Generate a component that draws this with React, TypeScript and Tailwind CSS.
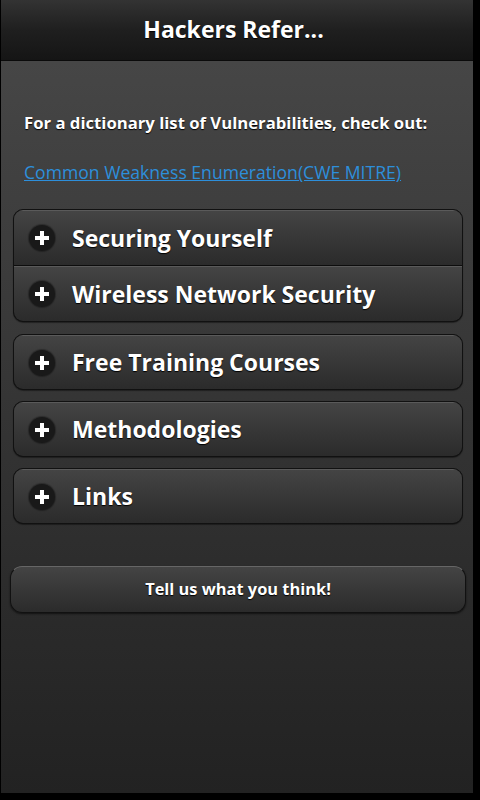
import React from "react";

const font = { fontFamily: '"Open Sans", "Noto Sans", "DejaVu Sans", sans-serif' };

function Plus() {
  return (
    <div className="w-[26px] h-[26px] rounded-full bg-[#191919] flex items-center justify-center shrink-0 shadow-[0_0_1px_1px_rgba(0,0,0,0.3)]">
      <svg width="16" height="16" viewBox="0 0 16 16">
        <rect x="6" y="1" width="4" height="14" fill="#fff" />
        <rect x="1" y="6" width="14" height="4" fill="#fff" />
      </svg>
    </div>
  );
}

function Row({ title, tall }: { title: string; tall?: boolean }) {
  return (
    <div
      className={`${tall ? "h-[55px]" : "h-[54px]"} flex items-center pl-[15px] bg-gradient-to-b from-[#444444] to-[#2b2b2b] border-t border-[#5a5a5a]`}
    >
      <Plus />
      <span className="ml-[17px] text-[23px] font-bold text-white [text-shadow:0_1px_1px_#000]">{title}</span>
    </div>
  );
}

function Group({ titles }: { titles: string[] }) {
  const tall = titles.length > 1;
  return (
    <div
      className={`mx-[12px] w-[450px] rounded-[10px] border border-[#111] overflow-hidden flex flex-col gap-px bg-[#0d0d0d] shadow-[0_1px_1px_rgba(0,0,0,0.4)] ${
        tall ? "mb-[1px]" : ""
      }`}
    >
      {titles.map((t) => (
        <Row key={t} title={t} tall={tall} />
      ))}
    </div>
  );
}

export default function App() {
  return (
    <div className="w-[480px] h-[800px] bg-black flex" style={font}>
      <div className="w-[472px] h-[793px] ml-px flex flex-col">
        <div className="h-[61px] shrink-0 bg-gradient-to-b from-[#333333] via-[#1f1f1f] to-[#151515] border-b border-[#0a0a0a] flex items-center justify-center pr-[7px]">
          <span className="text-[23px] font-bold text-white -mt-[2px] [text-shadow:0_1px_1px_#000]">Hackers Refer...</span>
        </div>
        <div className="flex-1 bg-gradient-to-b from-[#464646] to-[#222222] flex flex-col">
          <p className="mt-[50px] ml-[23px] text-[16.7px] leading-[24px] font-bold text-white [text-shadow:0_1px_1px_#000]">
            For a dictionary list of Vulnerabilities, check out:
          </p>
          <a className="mt-[25px] ml-[23px] text-[17.6px] leading-[24px] text-[#2d8fdb] underline self-start" href="#">
            Common Weakness Enumeration(CWE MITRE)
          </a>
          <div className="mt-[25px] flex flex-col gap-[11px]">
            <Group titles={["Securing Yourself", "Wireless Network Security"]} />
            <Group titles={["Free Training Courses"]} />
            <Group titles={["Methodologies"]} />
            <Group titles={["Links"]} />
          </div>
          <div className="mt-[42px] mx-[9px] w-[456px] h-[47px] rounded-[12px] border border-[#111] bg-gradient-to-b from-[#444444] to-[#2b2b2b] shadow-[0_1px_2px_rgba(0,0,0,0.6)] flex items-center justify-center border-t-[#666]">
            <span className="text-[16.4px] font-bold text-white [text-shadow:0_1px_1px_#000]">Tell us what you think!</span>
          </div>
        </div>
      </div>
    </div>
  );
}
